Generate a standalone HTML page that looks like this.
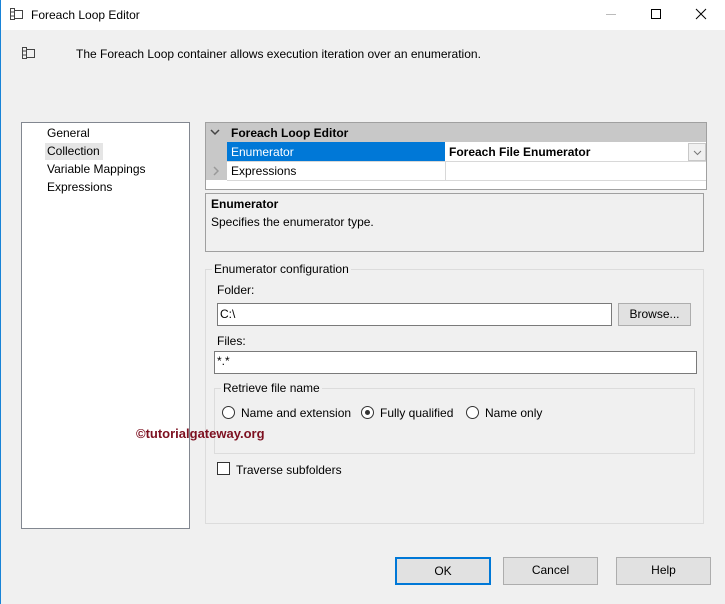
<!DOCTYPE html>
<html><head><style>
*{box-sizing:border-box;margin:0;padding:0}
body{width:725px;height:604px;background:#f0f0f0;font-family:"Liberation Sans",sans-serif;font-size:12px;color:#000;position:relative;overflow:hidden}
.a{position:absolute}
.t{position:absolute;white-space:nowrap;line-height:14px}
.btn{position:absolute;background:#e1e1e1;border:1px solid #adadad;text-align:center;line-height:25px}
.in{position:absolute;background:#fff;border:1px solid #7a7a7a}
.rad{position:absolute;width:13px;height:13px;border:1px solid #333;border-radius:50%;background:#fff}
</style></head><body>
<div class="a" style="left:0;top:0;width:725px;height:30px;background:#fff"></div>
<div class="a" style="left:0;top:0;width:1px;height:604px;background:#1883d7"></div>
<svg class="a" style="top:7px;left:9px" width="16" height="14" viewBox="0 0 16 14"><g fill="none" stroke="#444" stroke-width="1"><rect x="1.5" y="1.5" width="4" height="11"/><line x1="1.5" y1="5" x2="5.5" y2="5"/><line x1="1.5" y1="9" x2="5.5" y2="9"/><rect x="5.5" y="3.5" width="8" height="8"/></g></svg>
<div class="t" style="left:31px;top:8px;font-size:12px">Foreach Loop Editor</div>
<div class="a" style="left:606px;top:14px;width:10px;height:1px;background:#bbb"></div>
<div class="a" style="left:651px;top:9px;width:10px;height:10px;border:1px solid #000"></div>
<svg class="a" style="left:695px;top:8px" width="12" height="12" viewBox="0 0 12 12"><path d="M1 1L11 11M11 1L1 11" stroke="#000" stroke-width="1"/></svg>
<svg class="a" style="left:21px;top:46px" width="16" height="14" viewBox="0 0 16 14"><g fill="none" stroke="#444" stroke-width="1"><rect x="1.5" y="1.5" width="4" height="11"/><line x1="1.5" y1="5" x2="5.5" y2="5"/><line x1="1.5" y1="9" x2="5.5" y2="9"/><rect x="5.5" y="3.5" width="8" height="8"/></g></svg>
<div class="t" style="left:76px;top:47px">The Foreach Loop container allows execution iteration over an enumeration.</div>

<div class="a" style="left:21px;top:122px;width:169px;height:407px;background:#fff;border:1px solid #828790"></div>
<div class="a" style="left:45px;top:143px;width:58px;height:17px;background:#e5e5e5"></div>
<div class="t" style="left:47px;top:126px">General</div>
<div class="t" style="left:47px;top:144px">Collection</div>
<div class="t" style="left:47px;top:162px">Variable Mappings</div>
<div class="t" style="left:47px;top:180px">Expressions</div>

<div class="a" style="left:205px;top:122px;width:502px;height:68px;background:#fff;border:1px solid #a0a0a0"></div>
<div class="a" style="left:206px;top:123px;width:500px;height:19px;background:#c8c8c8"></div>
<div class="a" style="left:206px;top:142px;width:21px;height:38px;background:#c8c8c8"></div>
<svg class="a" style="left:210px;top:129px" width="10" height="7" viewBox="0 0 10 7"><path d="M1 1L5 5L9 1" fill="none" stroke="#444" stroke-width="1.5"/></svg>
<div class="t" style="left:231px;top:126px;font-weight:bold">Foreach Loop Editor</div>
<div class="a" style="left:227px;top:142px;width:218px;height:19px;background:#0078d7"></div>
<div class="t" style="left:231px;top:145px;color:#fff">Enumerator</div>
<div class="t" style="left:449px;top:145px;font-weight:bold">Foreach File Enumerator</div>
<div class="a" style="left:688px;top:143px;width:18px;height:18px;background:#f0f0f0;border:1px solid #c8c8c8"></div>
<svg class="a" style="left:693px;top:150px" width="9" height="6" viewBox="0 0 9 6"><path d="M1 1L4.5 4.5L8 1" fill="none" stroke="#777" stroke-width="1"/></svg>
<div class="a" style="left:227px;top:161px;width:479px;height:1px;background:#d8d8d8"></div>
<div class="a" style="left:227px;top:180px;width:479px;height:1px;background:#d8d8d8"></div>
<div class="a" style="left:445px;top:161px;width:1px;height:19px;background:#d8d8d8"></div>
<svg class="a" style="left:213px;top:166px" width="6" height="10" viewBox="0 0 6 10"><path d="M1 1L5 5L1 9" fill="none" stroke="#999" stroke-width="1.5"/></svg>
<div class="t" style="left:231px;top:164px">Expressions</div>

<div class="a" style="left:205px;top:193px;width:499px;height:59px;border:1px solid #a0a0a0"></div>
<div class="t" style="left:211px;top:197px;font-weight:bold">Enumerator</div>
<div class="t" style="left:211px;top:215px">Specifies the enumerator type.</div>

<div class="a" style="left:205px;top:269px;width:499px;height:255px;border:1px solid #dcdcdc"></div>
<div class="t" style="left:212px;top:262px;background:#f0f0f0;padding:0 2px">Enumerator configuration</div>
<div class="t" style="left:217px;top:283px">Folder:</div>
<div class="in" style="left:217px;top:303px;width:395px;height:23px"></div>
<div class="t" style="left:220px;top:307px">C:\</div>
<div class="btn" style="left:618px;top:303px;width:73px;height:23px;line-height:21px">Browse...</div>
<div class="t" style="left:217px;top:334px">Files:</div>
<div class="in" style="left:214px;top:351px;width:483px;height:23px"></div>
<div class="t" style="left:217px;top:354px">*.*</div>

<div class="a" style="left:214px;top:388px;width:481px;height:66px;border:1px solid #dcdcdc"></div>
<div class="t" style="left:221px;top:381px;background:#f0f0f0;padding:0 2px">Retrieve file name</div>
<div class="rad" style="left:222px;top:406px"></div>
<div class="t" style="left:241px;top:406px">Name and extension</div>
<div class="rad" style="left:361px;top:406px"></div>
<div class="a" style="left:365px;top:410px;width:5px;height:5px;border-radius:50%;background:#333"></div>
<div class="t" style="left:380px;top:406px">Fully qualified</div>
<div class="rad" style="left:466px;top:406px"></div>
<div class="t" style="left:485px;top:406px">Name only</div>
<div class="t" style="left:136px;top:427px;font-weight:bold;font-size:13px;color:#7d1020">©tutorialgateway.org</div>

<div class="a" style="left:217px;top:462px;width:13px;height:13px;border:1px solid #333;background:#fff"></div>
<div class="t" style="left:236px;top:463px">Traverse subfolders</div>

<div class="btn" style="left:395px;top:557px;width:96px;height:28px;border:2px solid #0078d7;line-height:24px">OK</div>
<div class="btn" style="left:503px;top:557px;width:95px;height:28px">Cancel</div>
<div class="btn" style="left:616px;top:557px;width:95px;height:28px">Help</div>
</body></html>
